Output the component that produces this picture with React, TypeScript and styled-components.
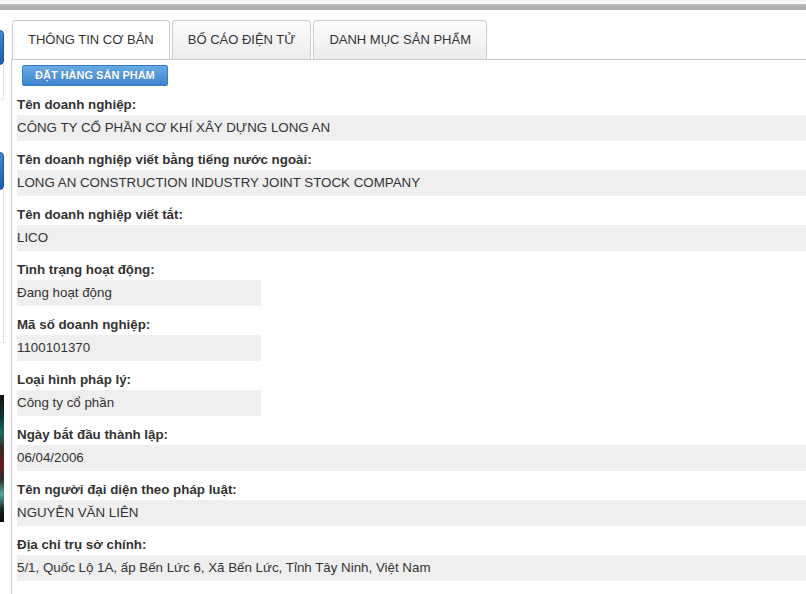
import React from "react";
import styled, { createGlobalStyle } from "styled-components";

const Global = createGlobalStyle`
  html, body { margin: 0; padding: 0; background: #fff; }
  body { width: 806px; height: 594px; overflow: hidden; font-family: "Liberation Sans", Arial, sans-serif; color: #333; }
  * { box-sizing: border-box; }
`;

const Page = styled.div`
  width: 806px;
  height: 594px;
  overflow: hidden;
`;

const TopBar = styled.div`
  height: 10px;
  background: linear-gradient(to bottom, #f3f3f3 0, #f7f7f7 4px, #c4c4c4 4px, #b2b2b2 6px, #adadad 10px);
`;

const Layout = styled.div`
  display: flex;
  align-items: stretch;
  height: 584px;
`;

const Sidebar = styled.div`
  width: 4px;
  flex: none;
  overflow: hidden;
  display: flex;
  flex-direction: column;
  align-items: flex-end;
  padding-top: 20px;
`;

const SideButton = styled.div<{ $h: number; $mt?: number }>`
  flex: none;
  width: 220px;
  height: ${(p) => p.$h}px;
  margin-top: ${(p) => p.$mt ?? 0}px;
  border-radius: 4px;
  background: linear-gradient(to bottom, #3d8ad8, #1a5cb0);
  border: 1px solid #1b57a3;
`;

const SideBox = styled.div<{ $h: number }>`
  flex: none;
  width: 220px;
  height: ${(p) => p.$h}px;
  border: 1px dotted #c8c8c8;
  border-top: none;
`;

const SideImage = styled.div<{ $mt: number }>`
  flex: none;
  width: 220px;
  height: 127px;
  margin-top: ${(p) => p.$mt}px;
  background: linear-gradient(
    to bottom,
    #101010 0,
    #0d3a3a 18%,
    #1c6a5e 30%,
    #3a2a20 42%,
    #6b1a22 55%,
    #2a2a2a 66%,
    #5aa7a0 78%,
    #182828 90%,
    #0a0a0a 100%
  );
`;

const Main = styled.div`
  flex: 1;
  margin-left: 7px;
  padding-top: 10px;
  display: flex;
  flex-direction: column;
  min-width: 0;
`;

const TabList = styled.div`
  display: flex;
  align-items: flex-end;
  gap: 2px;
  padding-left: 1px;
  border-bottom: 1px solid #cccccc;
`;

const Tab = styled.div<{ $active?: boolean }>`
  height: 39px;
  line-height: 38px;
  padding: 0 15px;
  font-size: 13px;
  color: #333;
  white-space: nowrap;
  border: 1px solid #cccccc;
  border-bottom: none;
  border-radius: 4px 4px 0 0;
  background: ${(p) => (p.$active ? "#ffffff" : "linear-gradient(to bottom, #fdfdfd, #ececec)")};
`;

const Panel = styled.div`
  flex: 1;
  border-left: 1px solid #cccccc;
  padding: 5px 0 0 5px;
`;

const OrderButton = styled.button`
  display: block;
  margin-left: 5px;
  height: 21px;
  padding: 0 12px;
  border: 1px solid #3b7bc4;
  border-radius: 2px;
  background: linear-gradient(to bottom, #67aae6, #3f84cf);
  color: #fff;
  font-family: "Liberation Sans", Arial, sans-serif;
  font-weight: bold;
  font-size: 11px;
  line-height: 19px;
  text-shadow: 0 0 1px rgba(0, 0, 0, 0.25);
  cursor: pointer;
`;

const Field = styled.div`
  margin-top: 10px;
`;

const Label = styled.div`
  font-weight: bold;
  font-size: 13.33px;
  line-height: 18px;
  color: #333;
  margin-bottom: 1px;
  white-space: nowrap;
`;

const Value = styled.div<{ $narrow?: boolean }>`
  height: 26px;
  line-height: 26px;
  font-size: 13.33px;
  color: #333;
  background: #efefef;
  width: ${(p) => (p.$narrow ? "244px" : "auto")};
  white-space: nowrap;
  overflow: hidden;
`;

const fields: { label: string; value: string; narrow?: boolean }[] = [
  { label: "Tên doanh nghiệp:", value: "CÔNG TY CỔ PHẦN CƠ KHÍ XÂY DỰNG LONG AN" },
  { label: "Tên doanh nghiệp viết bằng tiếng nước ngoài:", value: "LONG AN CONSTRUCTION INDUSTRY JOINT STOCK COMPANY" },
  { label: "Tên doanh nghiệp viết tắt:", value: "LICO" },
  { label: "Tình trạng hoạt động:", value: "Đang hoạt động", narrow: true },
  { label: "Mã số doanh nghiệp:", value: "1100101370", narrow: true },
  { label: "Loại hình pháp lý:", value: "Công ty cổ phần", narrow: true },
  { label: "Ngày bắt đầu thành lập:", value: "06/04/2006" },
  { label: "Tên người đại diện theo pháp luật:", value: "NGUYỄN VĂN LIÊN" },
  { label: "Địa chỉ trụ sở chính:", value: "5/1, Quốc Lộ 1A, ấp Bến Lức 6, Xã Bến Lức, Tỉnh Tây Ninh, Việt Nam" },
];

export default function App() {
  return (
    <Page>
      <Global />
      <TopBar />
      <Layout>
        <Sidebar>
          <SideButton $h={35} />
          <SideBox $h={35} />
          <SideButton $h={38} $mt={52} />
          <SideBox $h={153} />
          <SideImage $mt={52} />
        </Sidebar>
        <Main>
          <TabList>
            <Tab $active>THÔNG TIN CƠ BẢN</Tab>
            <Tab>BỐ CÁO ĐIỆN TỬ</Tab>
            <Tab>DANH MỤC SẢN PHẨM</Tab>
          </TabList>
          <Panel>
            <OrderButton>ĐẶT HÀNG SẢN PHẨM</OrderButton>
            {fields.map((f) => (
              <Field key={f.label}>
                <Label>{f.label}</Label>
                <Value $narrow={f.narrow}>{f.value}</Value>
              </Field>
            ))}
          </Panel>
        </Main>
      </Layout>
    </Page>
  );
}
